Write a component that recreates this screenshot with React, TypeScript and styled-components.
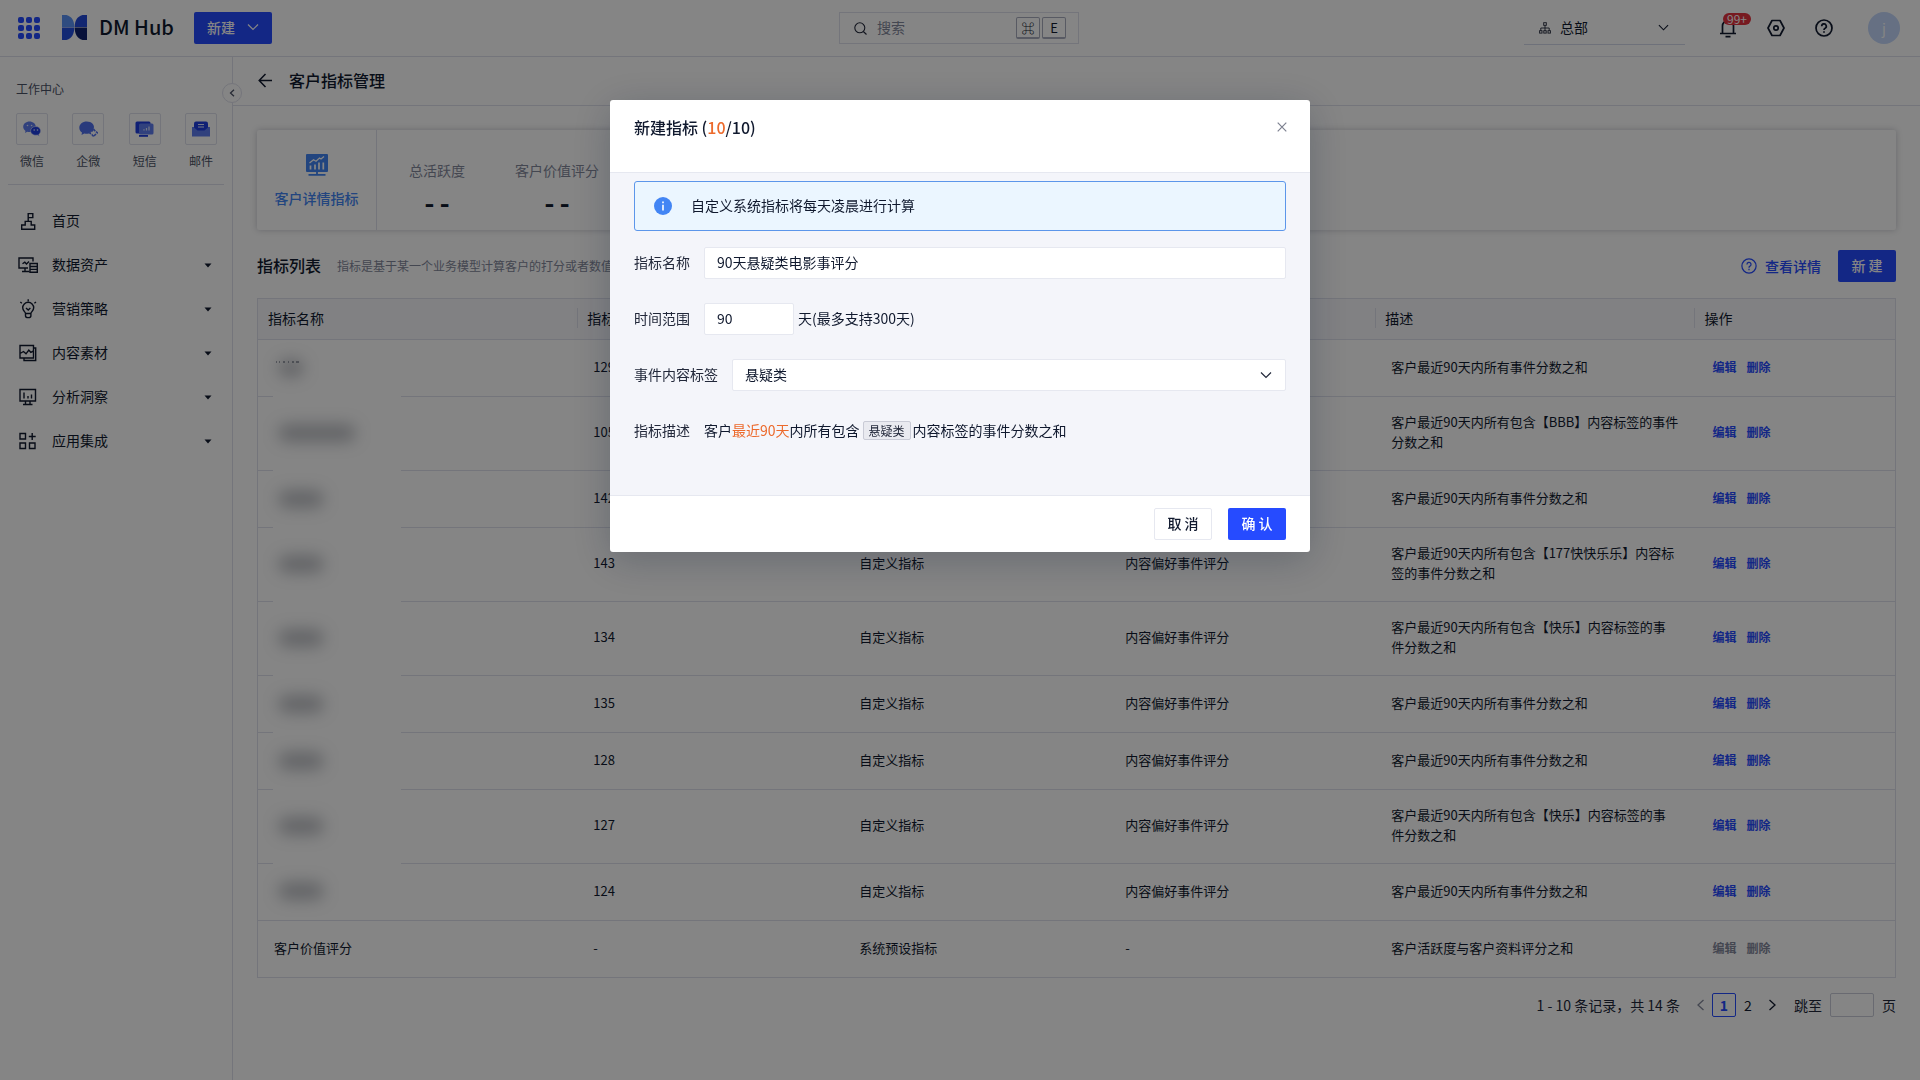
import React from "react";
import styled, { createGlobalStyle, css } from "styled-components";

const c = {
  ink: "#10192e",
  text: "#22283a",
  sub: "#4c5366",
  muted: "#83889b",
  line: "#dfe1ec",
  softLine: "#e6e8f0",
  primary: "#264bff",
  sky: "#4285f4",
  orange: "#ec6a2c",
  panel: "#f4f5fa",
};

const GlobalStyle = createGlobalStyle`
  *, *::before, *::after { box-sizing: border-box; }
  body { margin: 0; background: #fff; }
  body, button, input, select {
    font-family: "Noto Sans CJK SC", "Noto Sans", sans-serif;
    font-size: 14px;
    line-height: 20px;
    color: ${c.ink};
  }
  button { border: 0; padding: 0; background: none; cursor: pointer; }
  a { text-decoration: none; }
  svg { display: block; flex: none; }
`;

const Page = styled.div`
  min-height: 100vh;
  display: flex;
  flex-direction: column;
`;

/* ---------- top bar ---------- */

const TopBar = styled.header`
  display: grid;
  grid-template-columns: 1fr 240px 1fr;
  align-items: center;
  height: 57px;
  padding: 0 20px 0 18px;
  border-bottom: 1px solid ${c.line};
`;

const TopLeft = styled.div`
  display: flex;
  align-items: center;
`;

const AppsButton = styled.button`
  margin-right: 22px;
`;

const Brand = styled.a`
  display: flex;
  align-items: center;
  gap: 12px;
  margin-right: 20px;
  padding-bottom: 2px;
  color: ${c.ink};
  font: 500 20px/24px "Noto Sans CJK SC", sans-serif;
`;

const Primary = styled.button<{ $wide?: boolean }>`
  display: inline-flex;
  align-items: center;
  justify-content: center;
  gap: 12px;
  height: 32px;
  min-width: ${(p) => (p.$wide ? 78 : 58)}px;
  padding: 0 12px 2px;
  border-radius: 2px;
  background: ${c.primary};
  color: #fff;
  font-weight: 500;
`;

const Search = styled.label`
  display: flex;
  align-items: center;
  gap: 10px;
  height: 32px;
  padding: 0 12px 0 14px;
  border: 1px solid ${c.line};
`;

const SearchInput = styled.input`
  flex: 1;
  min-width: 0;
  border: 0;
  padding: 0 0 2px;
  outline: 0;
  background: none;
  &::placeholder {
    color: ${c.muted};
    opacity: 1;
  }
`;

const Keys = styled.span`
  display: flex;
  gap: 2px;
`;

const Key = styled.kbd`
  display: flex;
  align-items: center;
  justify-content: center;
  width: 24px;
  height: 22px;
  border: 1px solid #a9adbe;
  border-bottom-width: 2px;
  border-radius: 2px;
  color: ${c.ink};
  font: 400 13px/16px "Noto Sans CJK SC", "DejaVu Sans", sans-serif;
`;

const TopRight = styled.div`
  display: flex;
  align-items: center;
  justify-content: flex-end;
`;

const OrgPicker = styled.label`
  display: flex;
  align-items: center;
  gap: 9px;
  width: 161px;
  height: 33px;
  margin-right: 34px;
  padding: 0 16px 0 15px;
  border-bottom: 1px solid #d3d8ea;
`;

const BareSelect = styled.select`
  flex: 1;
  min-width: 0;
  height: 30px;
  padding: 0 0 2px;
  border: 0;
  outline: 0;
  appearance: none;
  background: none;
`;

const IconButton = styled.button<{ $gap: number }>`
  position: relative;
  margin-right: ${(p) => p.$gap}px;
`;

const Badge = styled.span`
  position: absolute;
  top: -5px;
  left: 4px;
  height: 12px;
  padding: 0 4px;
  border-radius: 6px;
  background: #e5323f;
  color: #fff;
  font-size: 12px;
  line-height: 11px;
`;

const Avatar = styled.button`
  width: 32px;
  height: 32px;
  border-radius: 50%;
  background: #c3d7fb;
  color: #fff;
`;

/* ---------- side bar ---------- */

const Columns = styled.div`
  flex: 1;
  display: flex;
`;

const Side = styled.aside`
  position: relative;
  flex: none;
  width: 233px;
  padding-top: 22px;
  border-right: 1px solid ${c.line};
`;

const SideTitle = styled.h2`
  margin: 0 16px 14px;
  color: ${c.sub};
  font-size: 12px;
  line-height: 20px;
  font-weight: 400;
`;

const Shortcuts = styled.div`
  display: flex;
  justify-content: space-between;
  margin: 0 8px;
  padding: 0 7px 13px 8px;
`;

const Shortcut = styled.a`
  display: flex;
  flex-direction: column;
  align-items: center;
  gap: 6px;
  color: ${c.sub};
  font-size: 12px;
`;

const ShortcutBox = styled.span`
  display: flex;
  align-items: center;
  justify-content: center;
  width: 32px;
  height: 32px;
  border: 1px solid ${c.line};
  border-radius: 2px;
`;

const Menu = styled.nav`
  margin: 0 8px;
  padding-top: 14px;
  border-top: 1px solid ${c.line};
`;

const MenuItem = styled.a`
  display: grid;
  grid-template-columns: 20px 1fr 8px;
  align-items: center;
  column-gap: 14px;
  height: 44px;
  padding: 0 12px 0 10px;
  color: ${c.ink};
`;

const MenuName = styled.span`
  padding-bottom: 2px;
`;

const Collapse = styled.button`
  position: absolute;
  top: 26px;
  right: -10px;
  display: flex;
  align-items: center;
  justify-content: center;
  width: 20px;
  height: 20px;
  border: 1px solid ${c.line};
  border-radius: 50%;
  background: #fff;
`;

/* ---------- main ---------- */

const Main = styled.main`
  flex: 1;
  min-width: 0;
`;

const PageHead = styled.div`
  display: flex;
  align-items: center;
  gap: 16px;
  height: 49px;
  padding: 0 0 2px 25px;
  border-bottom: 1px solid ${c.line};
`;

const PageTitle = styled.h1`
  margin: 0;
  font-size: 16px;
  line-height: 24px;
  font-weight: 500;
`;

const Content = styled.div`
  padding: 24px 24px 0;
`;

const Summary = styled.section`
  display: flex;
  height: 100px;
  border-radius: 2px;
  box-shadow: 0 0 6px rgba(20, 25, 50, 0.24);
`;

const SummaryTab = styled.button`
  display: flex;
  flex-direction: column;
  align-items: center;
  gap: 12px;
  width: 120px;
  padding-top: 24px;
  border-right: 1px solid ${c.line};
  color: ${c.sky};
  font-weight: 500;
`;

const Stats = styled.dl`
  display: flex;
  gap: 50px;
  margin: 0;
  padding: 30px 32px 0;
`;

const Stat = styled.div`
  display: flex;
  flex-direction: column;
  align-items: center;
  gap: 12px;
`;

const StatName = styled.dt`
  color: ${c.muted};
`;

const StatValue = styled.dd`
  margin: 0;
  font: 800 22px/24px Inter, sans-serif;
`;

const ListHead = styled.div`
  display: flex;
  align-items: center;
  margin: 20px 0 16px;
`;

const ListTitle = styled.h2`
  margin: 0 16px 0 0;
  padding-bottom: 2px;
  font-size: 16px;
  line-height: 24px;
  font-weight: 500;
`;

const ListNote = styled.p`
  flex: 1;
  margin: 0;
  color: ${c.muted};
  font-size: 12px;
`;

const DetailLink = styled.a`
  display: flex;
  align-items: center;
  gap: 8px;
  margin-right: 17px;
  color: ${c.primary};
  font-weight: 500;
`;

const Table = styled.table`
  width: 100%;
  table-layout: fixed;
  border-collapse: separate;
  border-spacing: 0;
  border: 1px solid ${c.line};
  border-bottom: 0;
`;

const Col = styled.col<{ $w: string }>`
  width: ${(p) => p.$w};
`;

const Th = styled.th`
  height: 41px;
  padding: 0 0 2px;
  border-bottom: 1px solid ${c.line};
  background: #f8f8fc;
  text-align: left;
  font-weight: 400;
  & > span {
    display: block;
    min-height: 20px;
    padding-left: 9px;
    border-left: 1px solid transparent;
  }
  & + & > span {
    border-left-color: ${c.line};
  }
`;

const Td = styled.td`
  height: 57px;
  padding: 15px 16px 18px;
  border-bottom: 1px solid ${c.line};
  font-size: 13px;
  line-height: 20px;
`;

const MaskedTd = styled(Td)<{ $openEdge: boolean }>`
  position: relative;
  ${(p) =>
    p.$openEdge &&
    css`
      border-bottom: 0;
      background: linear-gradient(
          to right,
          ${c.line} 15px,
          transparent 15px,
          transparent 143px,
          ${c.line} 143px
        )
        bottom / 100% 1px no-repeat;
    `}
`;

const Mask = styled.span`
  display: flex;
  padding: 1px 0 0 4px;
`;

const Smudge = styled.i<{ $w: number }>`
  width: ${(p) => p.$w}px;
  height: 18px;
  border-radius: 9px;
  background: rgba(50, 55, 70, 0.32);
  filter: blur(8px);
`;

const Slivers = styled.svg`
  position: absolute;
  top: 20px;
  left: 17px;
`;

const Actions = styled.div`
  display: flex;
  gap: 10px;
  padding-left: 2px;
`;

const Action = styled.button`
  color: ${c.primary};
  font-size: 12px;
  font-weight: 700;
  &:disabled {
    color: ${c.muted};
  }
`;

const Pager = styled.nav`
  display: flex;
  align-items: center;
  justify-content: flex-end;
  padding: 15px 0 24px;
  color: ${c.text};
`;

const PageButton = styled.button<{ $current?: boolean }>`
  display: flex;
  align-items: center;
  justify-content: center;
  width: 24px;
  height: 24px;
  border-radius: 2px;
  ${(p) =>
    p.$current &&
    css`
      border: 1px solid ${c.primary};
      color: ${c.primary};
      font-weight: 700;
    `}
`;

const PagerTotal = styled.span`
  margin-right: 8px;
`;

const Jump = styled.label`
  display: flex;
  align-items: center;
  gap: 8px;
  margin-left: 10px;
`;

const JumpInput = styled.input`
  width: 44px;
  height: 24px;
  border: 1px solid #c9ccd8;
  border-radius: 2px;
  background: none;
`;

/* ---------- dialog ---------- */

const Overlay = styled.div`
  position: fixed;
  inset: 0;
  display: flex;
  align-items: flex-start;
  justify-content: center;
  padding-top: 100px;
  background: rgba(0, 0, 0, 0.48);
`;

const Dialog = styled.section`
  width: 700px;
  border-radius: 3px;
  background: #fff;
  box-shadow: 0 8px 40px rgba(10, 20, 45, 0.24);
  overflow: hidden;
`;

const DialogHead = styled.div`
  display: flex;
  justify-content: space-between;
  height: 72px;
  padding: 15px 23px 0 24px;
`;

const DialogTitle = styled.h2`
  margin: 0;
  font-size: 16px;
  line-height: 24px;
  font-weight: 500;
`;

const Hot = styled.span`
  color: ${c.orange};
`;

const DialogClose = styled.button`
  align-self: flex-start;
  padding: 7px 0;
`;

const DialogBody = styled.form`
  display: flex;
  flex-direction: column;
  gap: 24px;
  padding: 8px 24px 48px;
  border: solid ${c.softLine};
  border-width: 1px 0;
  background: ${c.panel};
`;

const Alert = styled.div`
  display: flex;
  align-items: center;
  gap: 19px;
  height: 50px;
  margin-bottom: -8px;
  padding: 0 19px;
  border: 1px solid #5c96ea;
  border-radius: 3px;
  background: #ebf6ff;
`;

const AlertText = styled.span`
  padding-bottom: 2px;
`;

const Field = styled.div`
  display: flex;
  align-items: center;
  min-height: 32px;
`;

const FieldLabel = styled.label`
  margin-right: 14px;
  padding-bottom: 2px;
  color: ${c.text};
`;

const Unit = styled.span`
  padding-bottom: 2px;
`;

const boxed = css`
  height: 32px;
  border: 1px solid ${c.softLine};
  border-radius: 2px;
  outline: 0;
  background: #fff;
`;

const TextInput = styled.input<{ $narrow?: boolean }>`
  ${boxed}
  padding: 0 12px 2px;
  ${(p) => (p.$narrow ? "width: 90px; margin-right: 4px;" : "flex: 1; min-width: 0;")}
`;

const SelectBox = styled.div`
  ${boxed}
  flex: 1;
  display: flex;
  align-items: center;
  padding: 0 13px 0 12px;
`;

const Sentence = styled.p`
  display: flex;
  align-items: center;
  margin: 0;
  padding-bottom: 2px;
`;

const Tag = styled.span`
  margin: 0 2px 0 3px;
  padding: 0 5px;
  border: 1px solid #c9cbd6;
  border-radius: 2px;
  background: #e9eaf0;
  color: ${c.text};
  font-size: 12px;
  line-height: 17px;
`;

const DialogFoot = styled.div`
  display: flex;
  justify-content: flex-end;
  gap: 16px;
  padding: 12px 24px;
`;

const Secondary = styled(Primary)`
  border: 1px solid ${c.softLine};
  background: #fff;
  color: ${c.ink};
`;

/* ---------- icons ---------- */

const Chevron = ({ color = c.ink, size = 12 }: { color?: string; size?: number }) => (
  <svg width={size} height={size} viewBox="0 0 12 12" fill="none" stroke={color} strokeWidth="1.2">
    <path d="M1 3.5l5 5 5-5" />
  </svg>
);

const AppsIcon = () => (
  <svg width="22" height="22" viewBox="0 0 22 22" fill={c.primary}>
    {[0, 8, 16].map((y) =>
      [0, 8, 16].map((x) => <rect key={`${x}-${y}`} x={x} y={y} width="6" height="6" rx="2" />),
    )}
  </svg>
);

const LogoIcon = () => (
  <svg width="25" height="25" viewBox="0 0 25 25">
    <path d="M0 0h4.500C10 1.500 12.300 6 12.300 12H0z" fill="#5a93f5" />
    <path d="M25 0h-4.500C15 1.500 12.700 6 12.700 12H25z" fill="#2349d8" />
    <path d="M0 25h4.500c5.500-1.500 7.800-6.500 7.800-12.500H0z" fill="#244fdf" />
    <path d="M25 25h-4.500c-5.500-1.500-7.800-6.500-7.800-12.500H25z" fill="#0e2170" />
  </svg>
);

const SearchIcon = () => (
  <svg width="13" height="13" viewBox="0 0 13 13" fill="none" stroke={c.text} strokeWidth="1.1">
    <circle cx="5.800" cy="5.800" r="5" />
    <path d="M9.300 9.500l3.200 3" />
  </svg>
);

const OrgIcon = () => (
  <svg width="12" height="12" viewBox="0 0 12 12" fill="none" stroke={c.text} strokeWidth="0.900">
    <rect x="4.700" y="0.700" width="2.600" height="2.600" />
    <rect x="0.600" y="8.700" width="2.400" height="2.400" />
    <rect x="4.800" y="8.700" width="2.400" height="2.400" />
    <rect x="9" y="8.700" width="2.400" height="2.400" />
    <path d="M6 3.300v5.400M1.800 8.700V6h8.400v2.700" />
  </svg>
);

const BellIcon = () => (
  <svg width="18" height="20" viewBox="0 0 18 20" fill="none" stroke={c.ink} strokeWidth="1.7">
    <path d="M3.500 15.500V8a5.500 5.500 0 0 1 11 0v7.500M1 15.500h16M6.500 18.700h5" />
  </svg>
);

const HexIcon = () => (
  <svg width="18" height="18" viewBox="0 0 18 18" fill="none" stroke={c.ink} strokeWidth="1.7">
    <path d="M5 1.500h8L17 9l-4 7.500H5L1 9z" strokeLinejoin="round" />
    <circle cx="9" cy="9" r="2.200" />
  </svg>
);

const HelpIcon = ({ size, color, weight }: { size: number; color: string; weight: number }) => (
  <svg width={size} height={size} viewBox="0 0 18 18" fill="none" stroke={color} strokeWidth={weight}>
    <circle cx="9" cy="9" r="8" />
    <path d="M6.700 7.200a2.300 2.300 0 1 1 3.400 2c-.8.4-1.100.8-1.100 1.700" />
    <path d="M9 12.200v1.600" />
  </svg>
);

const WechatIcon = () => (
  <svg width="18" height="16" viewBox="0 0 18 16">
    <path d="M6.500 0.500c-3.500 0-6.300 2.300-6.300 5.300 0 1.700.9 3.100 2.300 4.100l-.5 2 2.200-1.200c4 1.200 8.600-1 8.600-4.900 0-3-2.800-5.300-6.300-5.300z" fill="#5f7df0" />
    <circle cx="4.500" cy="4.500" r="0.800" fill="#dfe6ff" />
    <circle cx="8.600" cy="4.500" r="0.800" fill="#dfe6ff" />
    <path d="M12.800 5.500c-2.900 0-5.200 1.900-5.200 4.400 0 3 3.500 5 6.700 4.100l2 1.200-.5-1.900c3.700-2.700 1.500-7.800-3-7.800z" fill="#1f3fe0" stroke="#fff" strokeWidth="0.500" />
    <circle cx="11.200" cy="9" r="0.800" fill="#dfe6ff" />
    <circle cx="14.500" cy="9" r="0.800" fill="#dfe6ff" />
  </svg>
);

const WecomIcon = () => (
  <svg width="19" height="16" viewBox="0 0 19 16">
    <path d="M7.700 0.500C3.600.5.300 3.200.300 6.700c0 2 1.100 3.700 2.700 4.900l-.5 2.400 2.800-1.500c1.500.4 3 .4 4.400.1l4.800-4.200C16.500 4 12.500.5 7.700.5z" fill="#4f70ee" />
    <path d="M14.500 8l1.800 2.200 2.200 1.600-2.200 1.800-1.600 2-1.800-2-2.200-1.600 2.200-1.800z" fill="none" stroke="#4f70ee" strokeWidth="1.500" strokeDasharray="2.800 0.900" />
  </svg>
);

const SmsIcon = () => (
  <svg width="19" height="16" viewBox="0 0 19 16">
    <rect x="0.500" y="0.500" width="15" height="12" rx="1.500" fill="#1f3fe0" />
    <rect x="4" y="2.500" width="14.500" height="11" rx="1.500" fill="#5f7df0" />
    <rect x="4" y="14" width="9" height="1.800" fill="#1f3fe0" />
    <path d="M9 9.500V8.300M11.500 9.500V7M14 9.500V5.500" stroke="#dfe6ff" strokeWidth="1.200" />
  </svg>
);

const MailIcon = () => (
  <svg width="18" height="16" viewBox="0 0 18 16">
    <path d="M0 6h18v9.500H0z" fill="#5f7df0" />
    <path d="M2 2.500Q2 .5 4 .5h10q2 0 2 2v4L12.500 9.500h-7L2 6.500z" fill="#1f3fe0" />
    <path d="M6 3.500h6M6 6h6" stroke="#dfe6ff" strokeWidth="1" />
  </svg>
);

const menuStroke = { fill: "none", stroke: c.ink, strokeWidth: 1.4 };

const HomeIcon = () => (
  <svg width="20" height="20" viewBox="0 0 20 20" {...menuStroke}>
    <path d="M3.700 18.300v-4.300h3.500v-3.600h6V14h3.500v4.300zM10.200 10.400V2.600h4.600v4h-4.600" />
  </svg>
);
const DataIcon = () => (
  <svg width="20" height="20" viewBox="0 0 20 20" {...menuStroke}>
    <path d="M10 13H1V3h14v3.500M4.500 8.800l2.300-1.600L8.500 9 11 6.500M4 16.500h7.500M7 13v3.500" />
    <path d="M12 8.500h7.300v8.800H12zM12 11.500h7.300M12 14.400h7.300" />
  </svg>
);
const BulbIcon = () => (
  <svg width="20" height="20" viewBox="0 0 20 20" {...menuStroke}>
    <path d="M7.500 14.500c0-1.500-2.800-2.700-2.800-5.700a5.500 5.500 0 0 1 11 0c0 3-2.800 4.200-2.800 5.700zM7.500 14.500v2.200c0 2.500 5.400 2.500 5.400 0v-2.200M8 9l2.200 2 2.200-2M10.200.3v2M2.300 3l1.600 1.200M18 3l-1.600 1.200" />
  </svg>
);
const MaterialIcon = () => (
  <svg width="20" height="20" viewBox="0 0 20 20" {...menuStroke}>
    <path d="M2 2.500h13.500v12.500H2zM15.500 5h2.200v12.500H6v-2.500M2 10.500l3.500-2 2.500 2.300 2.800-3.800 2 2.300L15.500 8" />
  </svg>
);
const InsightIcon = () => (
  <svg width="20" height="20" viewBox="0 0 20 20" {...menuStroke}>
    <path d="M2 2.500h15.500v11.500H2zM5 17.500h9.500M7.500 14v3.500M12 14v3.500M6 5.500v6M10 9v2.500M13.500 7.500v4" />
  </svg>
);
const GridPlusIcon = () => (
  <svg width="20" height="20" viewBox="0 0 20 20" {...menuStroke}>
    <path d="M2 2.500h5.500v5.500H2zM2 12h5.500v5.500H2zM11.500 12H17v5.500h-5.500zM14.200 2v7M10.800 5.500h6.900" />
  </svg>
);

const Caret = () => (
  <svg width="8" height="5" viewBox="0 0 8 5" fill={c.ink}>
    <path d="M0.500 0.500h7L4 4.500z" />
  </svg>
);

const BackIcon = () => (
  <svg width="15" height="15" viewBox="0 0 15 15" fill="none" stroke={c.ink} strokeWidth="1.500">
    <path d="M14 7.500H1.500M7.500 1l-6.300 6.500L7.500 14" />
  </svg>
);

const BoardIcon = () => (
  <svg width="22" height="22" viewBox="0 0 22 22">
    <rect x="0" y="0" width="22" height="18" rx="1" fill={c.sky} />
    <path d="M4.500 15.500v-4M9 15.500v-5M13 15.500v-7M17.300 15.500V8.500" stroke="#fff" strokeWidth="1.700" />
    <path d="M3.500 9l4-3.300 2.500 1.500L13.500 4l1.500 1 3-2.500" stroke="#fff" strokeWidth="1.300" fill="none" />
    <path d="M11 18v3M2.500 20.800h17" stroke={c.sky} strokeWidth="1.800" />
  </svg>
);

const CloseIcon = () => (
  <svg width="10" height="10" viewBox="0 0 10 10" stroke="#7d8190" strokeWidth="1.200">
    <path d="M0.700 0.700l8.600 8.600M9.300 0.700L0.700 9.300" />
  </svg>
);

const InfoIcon = () => (
  <svg width="18" height="18" viewBox="0 0 18 18">
    <circle cx="9" cy="9" r="9" fill={c.sky} />
    <path d="M9 7.800v5.700M9 4.500v1.700" stroke="#fff" strokeWidth="1.600" />
  </svg>
);

const Arrow = ({ left, color }: { left?: boolean; color: string }) => (
  <svg width="7" height="12" viewBox="0 0 7 12" fill="none" stroke={color} strokeWidth="1.300">
    <path d={left ? "M6.500 1L1 6l5.500 5" : "M.5 1L6 6 .5 11"} />
  </svg>
);

/* ---------- data ---------- */

const shortcuts = [
  { name: "微信", icon: <WechatIcon /> },
  { name: "企微", icon: <WecomIcon /> },
  { name: "短信", icon: <SmsIcon /> },
  { name: "邮件", icon: <MailIcon /> },
];

const menu = [
  { name: "首页", icon: <HomeIcon />, leaf: true },
  { name: "数据资产", icon: <DataIcon /> },
  { name: "营销策略", icon: <BulbIcon /> },
  { name: "内容素材", icon: <MaterialIcon /> },
  { name: "分析洞察", icon: <InsightIcon /> },
  { name: "应用集成", icon: <GridPlusIcon /> },
];

const columns = [
  { key: "name", name: "指标名称", w: "19.5%" },
  { key: "id", name: "指标ID", w: "16.25%" },
  { key: "kind", w: "16.25%" },
  { key: "group", w: "16.25%" },
  { key: "note", name: "描述", w: "19.5%" },
  { key: "actions", name: "操作", w: "12.25%" },
];

type Row = { name?: string; mask?: number; id: string; kind?: string; group?: string; note: string };

const noteFor = (tag?: string) =>
  tag ? `客户最近90天内所有包含【${tag}】内容标签的事件分数之和` : "客户最近90天内所有事件分数之和";

const custom = (id: string, tag?: string): Row => ({
  id,
  mask: 46,
  kind: "自定义指标",
  group: "内容偏好事件评分",
  note: noteFor(tag),
});

const rows: Row[] = [
  { id: "129", mask: 26, note: noteFor() },
  { id: "105", mask: 78, note: noteFor("BBB") },
  { id: "142", mask: 46, note: noteFor() },
  custom("143", "177快快乐乐"),
  custom("134", "快乐"),
  custom("135"),
  custom("128"),
  custom("127", "快乐"),
  custom("124"),
  { name: "客户价值评分", id: "-", kind: "系统预设指标", group: "-", note: "客户活跃度与客户资料评分之和" },
];

/* ---------- sections ---------- */

const Header = () => (
  <TopBar>
    <TopLeft>
      <AppsButton aria-label="应用"><AppsIcon /></AppsButton>
      <Brand href="#"><LogoIcon />DM Hub</Brand>
      <Primary $wide>新建<Chevron color="#fff" /></Primary>
    </TopLeft>
    <Search>
      <SearchIcon />
      <SearchInput placeholder="搜索" aria-label="搜索" />
      <Keys><Key>⌘</Key><Key>E</Key></Keys>
    </Search>
    <TopRight>
      <OrgPicker>
        <OrgIcon />
        <BareSelect aria-label="组织"><option>总部</option></BareSelect>
        <Chevron size={11} />
      </OrgPicker>
      <IconButton aria-label="通知" $gap={30}><BellIcon /><Badge>99+</Badge></IconButton>
      <IconButton aria-label="设置" $gap={30}><HexIcon /></IconButton>
      <IconButton aria-label="帮助" $gap={35}><HelpIcon size={18} color={c.ink} weight={1.7} /></IconButton>
      <Avatar>j</Avatar>
    </TopRight>
  </TopBar>
);

const Sidebar = () => (
  <Side>
    <SideTitle>工作中心</SideTitle>
    <Shortcuts>
      {shortcuts.map((s) => (
        <Shortcut href="#" key={s.name}><ShortcutBox>{s.icon}</ShortcutBox>{s.name}</Shortcut>
      ))}
    </Shortcuts>
    <Menu>
      {menu.map((m) => (
        <MenuItem href="#" key={m.name}>{m.icon}<MenuName>{m.name}</MenuName>{!m.leaf && <Caret />}</MenuItem>
      ))}
    </Menu>
    <Collapse aria-label="收起">
      <svg width="6" height="8" viewBox="0 0 6 8" fill="none" stroke={c.sub} strokeWidth="1.300">
        <path d="M5 .7L1.500 4 5 7.300" />
      </svg>
    </Collapse>
  </Side>
);

const MetricTable = () => (
  <Table>
    <colgroup>{columns.map((k) => <Col key={k.key} $w={k.w} />)}</colgroup>
    <thead>
      <tr>{columns.map((k) => <Th key={k.key} scope="col"><span>{k.name}</span></Th>)}</tr>
    </thead>
    <tbody>
      {rows.map((r, i) => (
        <tr key={r.id}>
          {r.mask ? (
            <MaskedTd $openEdge={i < 8}>
              <Mask><Smudge $w={r.mask} /></Mask>
              {i === 0 && (
                <Slivers width="26" height="3" viewBox="0 0 26 3" stroke={c.sub} strokeWidth="1">
                  <path d="M1 2h1M4 2h1M8 2h2M13 2h1M17 2h2M21 2h3" />
                </Slivers>
              )}
            </MaskedTd>
          ) : (
            <Td>{r.name}</Td>
          )}
          <Td>{r.id}</Td>
          <Td>{r.kind}</Td>
          <Td>{r.group}</Td>
          <Td>{r.note}</Td>
          <Td>
            <Actions>
              <Action disabled={!r.mask}>编辑</Action>
              <Action disabled={!r.mask}>删除</Action>
            </Actions>
          </Td>
        </tr>
      ))}
    </tbody>
  </Table>
);

const NewMetricDialog = () => (
  <Overlay>
    <Dialog role="dialog" aria-modal="true" aria-labelledby="dialog-title">
      <DialogHead>
        <DialogTitle id="dialog-title">新建指标 (<Hot>10</Hot>/10)</DialogTitle>
        <DialogClose aria-label="关闭"><CloseIcon /></DialogClose>
      </DialogHead>
      <DialogBody>
        <Alert role="note"><InfoIcon /><AlertText>自定义系统指标将每天凌晨进行计算</AlertText></Alert>
        <Field>
          <FieldLabel htmlFor="metric-name">指标名称</FieldLabel>
          <TextInput id="metric-name" defaultValue="90天悬疑类电影事评分" />
        </Field>
        <Field>
          <FieldLabel htmlFor="metric-days">时间范围</FieldLabel>
          <TextInput id="metric-days" $narrow defaultValue="90" />
          <Unit>天(最多支持300天)</Unit>
        </Field>
        <Field>
          <FieldLabel htmlFor="metric-tag">事件内容标签</FieldLabel>
          <SelectBox>
            <BareSelect id="metric-tag"><option>悬疑类</option></BareSelect>
            <Chevron color={c.text} />
          </SelectBox>
        </Field>
        <Field>
          <FieldLabel as="span">指标描述</FieldLabel>
          <Sentence>
            客户<Hot>最近90天</Hot>内所有包含<Tag>悬疑类</Tag>内容标签的事件分数之和
          </Sentence>
        </Field>
      </DialogBody>
      <DialogFoot>
        <Secondary>取 消</Secondary>
        <Primary>确 认</Primary>
      </DialogFoot>
    </Dialog>
  </Overlay>
);

export default function App() {
  return (
    <Page>
      <GlobalStyle />
      <Header />
      <Columns>
        <Sidebar />
        <Main>
          <PageHead>
            <button aria-label="返回"><BackIcon /></button>
            <PageTitle>客户指标管理</PageTitle>
          </PageHead>
          <Content>
            <Summary>
              <SummaryTab><BoardIcon />客户详情指标</SummaryTab>
              <Stats>
                <Stat><StatName>总活跃度</StatName><StatValue>- -</StatValue></Stat>
                <Stat><StatName>客户价值评分</StatName><StatValue>- -</StatValue></Stat>
              </Stats>
            </Summary>
            <ListHead>
              <ListTitle>指标列表</ListTitle>
              <ListNote>指标是基于某一个业务模型计算客户的打分或者数值</ListNote>
              <DetailLink href="#"><HelpIcon size={16} color={c.primary} weight={1.4} />查看详情</DetailLink>
              <Primary>新 建</Primary>
            </ListHead>
            <MetricTable />
            <Pager aria-label="分页">
              <PagerTotal>1 - 10 条记录，共 14 条</PagerTotal>
              <PageButton aria-label="上一页"><Arrow left color={c.muted} /></PageButton>
              <PageButton $current>1</PageButton>
              <PageButton>2</PageButton>
              <PageButton aria-label="下一页"><Arrow color={c.ink} /></PageButton>
              <Jump>跳至<JumpInput aria-label="页码" />页</Jump>
            </Pager>
          </Content>
        </Main>
      </Columns>
      <NewMetricDialog />
    </Page>
  );
}
